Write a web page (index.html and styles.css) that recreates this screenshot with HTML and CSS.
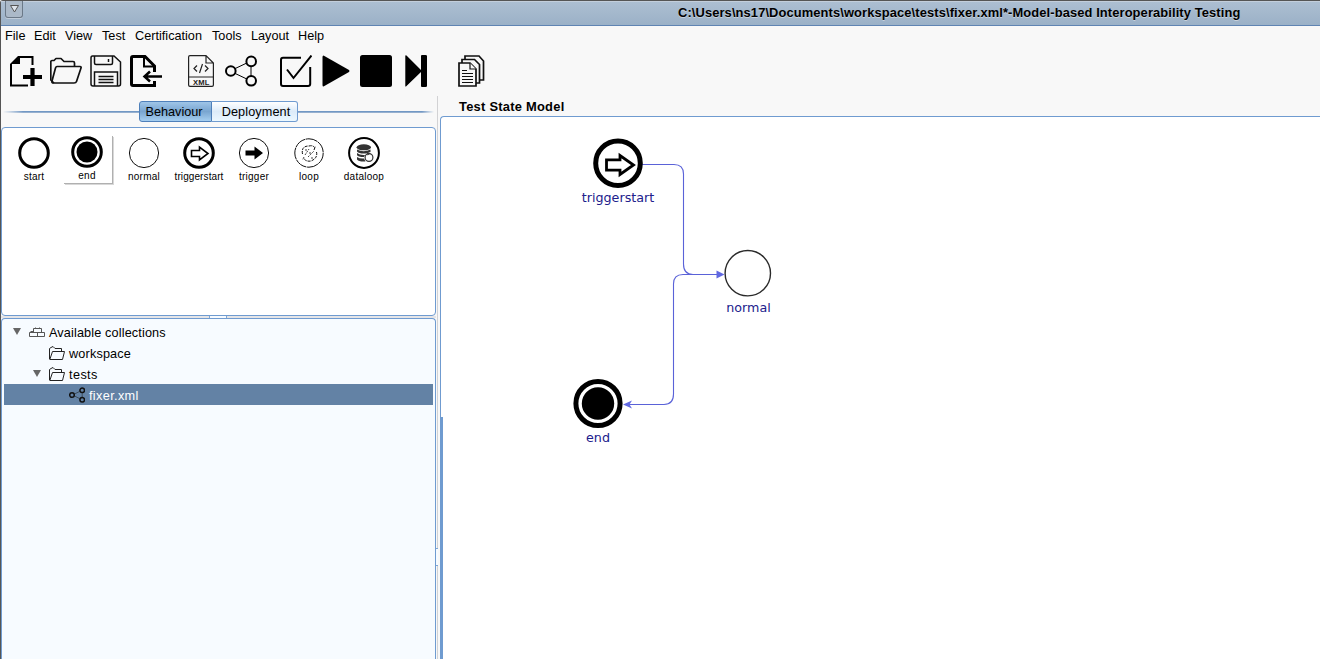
FILE: index.html
```html
<!DOCTYPE html>
<html lang="en">
<head>
<meta charset="utf-8">
<title>Model-based Interoperability Testing</title>
<link rel="stylesheet" href="styles.css">
</head>
<body>
<div class="window">
  <header class="titlebar">
    <span class="winmenu"><svg width="17" height="17" viewBox="0 0 17 17"><path d="M4.500 5.500H12.500L8.500 12Z" fill="#dde3ea" stroke="#555" /></svg></span>
    <span class="title">C:\Users\ns17\Documents\workspace\tests\fixer.xml*-Model-based Interoperability Testing</span>
  </header>
  <nav class="menubar">
    <span class="m-file">File</span><span class="m-edit">Edit</span><span class="m-view">View</span><span class="m-test">Test</span><span class="m-cert">Certification</span><span class="m-tools">Tools</span><span class="m-layout">Layout</span><span class="m-help">Help</span>
  </nav>
  <div class="toolbar">
    <svg viewBox="0 0 32 32"><path d="M9 2H22.500V10M1 9V30.500H18" fill="none" stroke="#000" stroke-width="2"/><path d="M0 9L8 1H10V9Z"/><path d="M13 22H32M22.500 13V31" stroke="#000" stroke-width="4.200"/></svg>
    <svg viewBox="0 0 32 32" fill="none" stroke="#111" stroke-width="1.700" stroke-linejoin="round"><path d="M4 28L.8 25V7Q.8 5.500 2 5.500H4L6 3.500H11L14 6.500H23Q24.500 6.500 24.500 8V11"/><path d="M7 11.500H30Q31.500 11.500 31 13L26.500 26.500Q26 28 24 28H3.500Q1.500 28 2 26L5.500 13Q6 11.500 7 11.500Z"/></svg>
    <svg viewBox="0 0 32 32" fill="none" stroke="#111" stroke-width="1.500"><path d="M2.500 1H24L30.500 7V29Q30.500 31 28.500 31H3Q1 31 1 29V3Q1 1 2.500 1Z"/><path d="M4.500 1V8Q4.500 9.500 6 9.500H21Q22.500 9.500 22.500 8V1M18.500 4V7M4.500 31V17H27.500V31M8.500 21.500H23.500M8.500 24.500H23.500M8.500 27.500H23.500"/></svg>
    <svg viewBox="0 0 32 32" fill="none" stroke="#000"><path d="M24.500 17V11L15 1.500H3Q1.500 1.500 1.500 3V29Q1.500 30.500 3 30.500H24.500V26" stroke-width="3"/><path d="M14 2V11.500H24" stroke-width="2"/><path d="M32 21.500H15M20 16.500L14.500 21.500L20 26.500" stroke-width="2.500"/></svg>
    <svg class="gap-a" viewBox="0 0 32 32" fill="none" stroke="#222"><path d="M5 .6H21L28.400 8V30Q28.400 31.400 27 31.400H5Q3.600 31.400 3.600 30V2Q3.600 .6 5 .6ZM21 .6V8H28.400M3.600 22H28.400" stroke-width="1.200"/><path d="M12 10.500L9 13.500L12 16.500M17.500 9L14.500 18M20 10.500L23 13.500L20 16.500" stroke-width="1.200"/><text x="16.200" y="29.700" class="xml">XML</text></svg>
    <svg viewBox="0 0 32 32" fill="none" stroke="#000"><path d="M5 16L26 6V26Z" stroke-width="1"/><g fill="#f8f8f8" stroke-width="2"><circle cx="5.800" cy="16" r="4.800"/><circle cx="26.200" cy="6.400" r="4.800"/><circle cx="26.200" cy="25.800" r="4.800"/></g></svg>
    <svg class="gap-a" viewBox="0 0 32 32" fill="none" stroke="#000" stroke-width="2"><path d="M21 2.800H3Q1 2.800 1 5V29Q1 31 3 31H28Q30.200 31 30.200 29V12"/><path d="M7 14.500L13.500 23L31.500 .5"/></svg>
    <svg viewBox="0 0 32 32"><path d="M3.500 .5L29 15Q30 16 29 17L3.500 31.500Q2.500 31.500 2.500 30V2Q2.500 .5 3.500 .5Z"/></svg>
    <svg viewBox="0 0 32 32"><rect width="32" height="32" rx="2.500"/></svg>
    <svg viewBox="0 0 32 32"><path d="M5.300 1V31Q5.300 32 6.500 31L21 17V31Q21 32 22 32H25.500Q27 32 27 31V1Q27 0 25.500 0H22Q21 0 21 1V15L6.500 .5Q5.300 0 5.300 1Z"/></svg>
    <svg class="gap-b" viewBox="0 0 32 32" fill="#f8f8f8" stroke="#111" stroke-width="1.700"><path d="M10 1H24L28.500 6V25H10Z"/><path d="M7 4.500H19.500L24.500 9.500V28H7Z"/><path d="M4 8H15L21 14V31H4Z"/><path d="M15 8V14H21M7 15.500H12M7 18.500H18M7 21.500H18M7 24.500H18M7 27.500H18" stroke-width="1.200"/></svg>
  </div>
  <div class="main">
    <aside class="left">
      <div class="tabs"><i class="rule"></i><span class="tab active">Behaviour</span><span class="tab second">Deployment</span><i class="rule rule-r"></i></div>
      <section class="palette">
        <figure class="p-start"><svg viewBox="0 0 32 32"><circle cx="16" cy="16" r="14.300" fill="#fff" stroke="#000" stroke-width="3"/></svg><figcaption>start</figcaption></figure>
        <figure class="p-end"><svg viewBox="0 0 32 32"><circle cx="16" cy="16" r="14.300" fill="#fff" stroke="#000" stroke-width="3"/><circle cx="16" cy="16" r="10.500"/></svg><figcaption>end</figcaption></figure>
        <figure class="p-normal"><svg viewBox="0 0 32 32"><circle cx="16" cy="16" r="14.600" fill="#fff" stroke="#111"/></svg><figcaption>normal</figcaption></figure>
        <figure class="p-ts"><svg viewBox="0 0 32 32"><circle cx="16" cy="16" r="14.300" fill="#fff" stroke="#000" stroke-width="3"/><path d="M8.500 13.500H16.500V10L25 16.500L16.500 23V19.500H8.500Z" fill="#fff" stroke="#000" stroke-width="1.600"/></svg><figcaption>triggerstart</figcaption></figure>
        <figure class="p-trig"><svg viewBox="0 0 32 32"><circle cx="16" cy="16" r="14.600" fill="#fff" stroke="#111"/><path d="M7.500 13.500H16.500V9.500L25 16L16.500 22.500V18.500H7.500Z"/></svg><figcaption>trigger</figcaption></figure>
        <figure class="p-loop"><svg viewBox="0 0 32 32" fill="none" stroke="#111"><circle cx="16" cy="16" r="14.200" fill="#fff" stroke-dasharray="12 .6"/><path d="M9.500 17Q8 9 16 9Q20 8 21.500 10.500M21 13L22.500 9M23.500 15Q25 21 18 24Q13 25 10.500 21" stroke-dasharray="3 1"/><path d="M12 18L16 12M15 20L21 14M12 13H15M16 16H18M18 21H21M11 20L9.500 23" stroke-width=".8" stroke-dasharray="2 1"/></svg><figcaption>loop</figcaption></figure>
        <figure class="p-data"><svg viewBox="0 0 32 32"><circle cx="16" cy="16" r="14.900" fill="#fff" stroke="#000" stroke-width="2"/><g fill="#333"><ellipse cx="15.800" cy="10.300" rx="7.200" ry="3"/><path d="M9 12.500Q15.500 16 22.500 12.500V15L18 16.500Q11 17 9 14.500ZM9 16Q12 18.500 17 18L16 20Q10 20 9 18ZM9 20Q12 22 16 21.500L17.500 24.500Q11 25 9 22.500Z"/></g><circle cx="21" cy="20.500" r="3.900" fill="#fff" stroke="#333" stroke-width="1.200"/><path d="M19 15L22.500 16.500L19.500 18.500Z" fill="#333"/></svg><figcaption>dataloop</figcaption></figure>
      </section>
      <div class="split-h"><i></i></div>
      <section class="tree">
        <div class="row"><b class="arrow"></b><svg class="ti" viewBox="0 0 16 16" fill="none" stroke="#555"><path d="M.5 12.500V8.500H15.500V12.500ZM4.500 8.500V4.500H12.500V8.500M6.500 4.500V3.500M10.500 4.500V3.500M8.500 8.500V12.500M1.500 7.500H4"/></svg><span class="t-avail">Available collections</span></div>
        <div class="row lvl1"><b class="arrow none"></b><svg class="ti" viewBox="0 0 16 16" fill="none" stroke="#222"><path d="M.5 14V3.500L2 2.500L4 1.500L6 3.500H12.500V6M3.500 6.500H15.500L13.500 14.500H.8Z"/></svg><span class="t-work">workspace</span></div>
        <div class="row lvl1"><b class="arrow"></b><svg class="ti" viewBox="0 0 16 16" fill="none" stroke="#222"><path d="M.5 14V3.500L2 2.500L4 1.500L6 3.500H12.500V6M3.500 6.500H15.500L13.500 14.500H.8Z"/></svg><span class="t-tests">tests</span></div>
        <div class="row lvl2 selected"><b class="arrow none"></b><svg class="ti" viewBox="0 0 16 16" fill="none" stroke="#111"><path d="M5.500 7L10.500 4.500M5.500 9L10.500 11.500M13.200 6V10" stroke="#3d4d5c"/><g stroke-width="1.500"><circle cx="3" cy="8" r="2.300"/><circle cx="13.200" cy="3.300" r="2.300"/><circle cx="13.200" cy="12.800" r="2.300"/></g></svg><span class="t-fixer">fixer.xml</span></div>
      </section>
    </aside>
    <div class="split-v"><i></i></div>
    <section class="right">
      <h2>Test State Model</h2>
      <div class="canvas">
        <svg viewBox="441 117 879 542" fill="none">
          <g stroke="#5a62d8" stroke-width="1.100">
            <path d="M642 164.500H674Q683.500 164.500 683.500 174V264Q683.500 274.500 693 274.500H718"/>
            <path d="M718 274.500H683Q673.500 274.500 673.500 284V394Q673.500 404.500 664 404.500H628"/>
          </g>
          <path d="M716.500 270.500L724.500 274.500L716.500 278.500Z" fill="#6068e2"/>
          <path d="M623 404.500L632 400.500L629.500 404.500L632 408.500Z" fill="#6068e2"/>
          <circle cx="618" cy="163.200" r="22.300" fill="#fff" stroke="#000" stroke-width="5"/>
          <path d="M606.500 159.800H620V155.500L633.500 165L620 174.500V170.200H606.500Z" stroke="#000" stroke-width="2.800"/>
          <circle cx="747.800" cy="273.200" r="22.700" fill="#fff" stroke="#2a2a2a" stroke-width="1.400"/>
          <circle cx="598" cy="403.500" r="22.100" fill="#fff" stroke="#000" stroke-width="5"/>
          <circle cx="598" cy="403.500" r="16.200" fill="#000"/>
          <g class="labels"><text x="618" y="202">triggerstart</text><text x="748.500" y="312">normal</text><text x="598" y="442">end</text></g>
        </svg>
      </div>
    </section>
  </div>
</div>
</body>
</html>
```

FILE: styles.css
```css
* { box-sizing: border-box; }
body { margin: 0; overflow: hidden; font: 12.7px/16px "Liberation Sans", sans-serif; color: #000; }
svg { display: block; flex: none; }
.window { width: 1320px; height: 659px; display: flex; flex-direction: column; background: #f8f8f8; border-left: 1px solid #555; border-top: 1px solid #555; border-top-left-radius: 3px; }
.titlebar { height: 25px; flex: none; display: flex; background: linear-gradient(#adbfd2, #9bb1c7); border-bottom: 1px solid #5f84b3; box-shadow: inset 0 1px #c3cedb; }
.winmenu { width: 18px; height: 17px; margin-left: 4px; border: 1px solid #6b7988; border-top: 0; border-radius: 0 0 3px 3px; box-shadow: 0 1px #c0ccd9; background: #abb9c8; }
.winmenu svg { margin-top: -1px; }
.title { margin: 4px 0 0 655px; font-weight: bold; font-size: 12.9px; letter-spacing: .11px; white-space: nowrap; text-shadow: 0 1px #c8d2dc; }
.menubar { height: 20px; flex: none; display: flex; padding: 2px 0 0 4px; }
.menubar span { white-space: nowrap; flex: none; }
.m-file { width: 29px; } .m-edit { width: 31px; } .m-view { width: 37px; } .m-test { width: 33px; } .m-cert { width: 77px; } .m-tools { width: 39px; } .m-layout { width: 47px; }
.toolbar { height: 50px; flex: none; display: flex; gap: 8px; padding: 9px 0 0 9px; }
.toolbar svg { width: 32px; height: 32px; }
.toolbar .gap-a { margin-left: 15px; }
.toolbar .gap-b { margin-left: 15px; }
.xml { font: bold 7.6px "Liberation Sans", sans-serif; text-anchor: middle; fill: #222; stroke: none; letter-spacing: .2px; }
.main { flex: 1; min-height: 0; display: flex; }
.left { width: 435px; flex: none; display: flex; flex-direction: column; }
.tabs { height: 31px; flex: none; display: flex; align-items: center; padding: 0 1px 0 2px; }
.rule { flex: none; width: 136px; height: 2px; background: linear-gradient(#5f8cc0, #a9bcd3); -webkit-mask: linear-gradient(90deg, transparent, #000 20px); }
.rule-r { -webkit-mask: linear-gradient(270deg, transparent, #000 12px); }
.tab { height: 21px; line-height: 20px; border: 1px solid #4f80ba; text-align: center; white-space: nowrap; }
.active { width: 73px; padding-right: 3px; border-radius: 3px 0 0 3px; background: linear-gradient(#9fc5e8, #79a5d0 50%, #a5cef0); }
.second { width: 86px; padding-left: 3px; border-left: 0; border-radius: 0 3px 3px 0; border-color: #6f9bd0; letter-spacing: .1px; background: linear-gradient(#fff, #dcebf9 50%, #ecf8ff); }
.palette { height: 189px; flex: none; display: flex; border: 1px solid #6f9bd0; border-radius: 4px; background: #fff; padding-top: 8px; }
figure { margin: 0; flex: none; display: flex; flex-direction: column; align-items: center; width: 55px; height: 50px; padding-top: 1px; }
figure svg { width: 32px; height: 32px; }
figcaption { font-size: 10px; line-height: 12px; margin-top: 2px; letter-spacing: .25px; white-space: nowrap; }
.p-start { margin-left: 4.5px; }
.p-end { width: 49px; height: 48px; margin-left: 2.5px; padding: 0 2px 0 0; border: solid #b0b0b0; border-width: 0 1px 1px 0; box-shadow: 1px 1px #d8d8d8; }
.p-normal { margin-left: 3.500px; }
.p-ts figcaption { letter-spacing: .1px; }
.split-h { height: 2px; flex: none; display: flex; background: #e5e5e7; padding-left: 208px; }
.split-h i { width: 18px; border: solid #80a6d4; border-width: 0 1px; background: #f7fbff; }
.tree { flex: 1; border: 1px solid #6f9bd0; border-bottom: 0; border-radius: 4px 4px 0 0; background: #f7fbff; padding: 2px 2px 0 2px; }
.row { height: 21px; display: flex; align-items: center; padding-left: 8px; white-space: nowrap; }
.arrow { width: 8px; height: 7px; margin: 0 8px 0 1px; background: #666; clip-path: polygon(0 0, 100% 0, 50% 100%); }
.none { visibility: hidden; }
.ti { width: 16px; height: 16px; margin-right: 4px; }
.lvl1 { padding-left: 28px; }
.lvl2 { padding-left: 48px; }
.t-avail { letter-spacing: .13px; }
.t-work { letter-spacing: .15px; }
.t-tests { letter-spacing: .4px; }
.t-fixer { letter-spacing: .35px; }
.row span { padding-top: 2px; }
.selected { background: #6382a5; color: #fff; }
.split-v { width: 4px; flex: none; border-right: 1px solid #f8f8f8; background: linear-gradient(90deg, #f8f8f8 1px, #d2d2d4 1px 2px, #f8f8f8 2px); padding-top: 452px; }
.split-v i { display: block; width: 2px; height: 18px; border: solid #80a6d4; border-width: 1px 0; background: #f7fbff; }
.right { flex: 1; min-width: 0; display: flex; flex-direction: column; }
h2 { margin: 0; height: 20px; flex: none; padding: 3px 0 0 19px; font: bold 12.9px/16px "Liberation Sans", sans-serif; letter-spacing: .25px; }
.canvas { flex: 1; background: linear-gradient(#6f9bd0, #6f9bd0) 0 300px / 2px 100% no-repeat #fff; border: solid #6f9bd0; border-width: 1px 0 0 1px; border-top-left-radius: 4px; }
.canvas svg { width: 879px; height: 542px; }
.labels { font: 12.7px "DejaVu Sans", sans-serif; text-anchor: middle; fill: #20208c; }
```
